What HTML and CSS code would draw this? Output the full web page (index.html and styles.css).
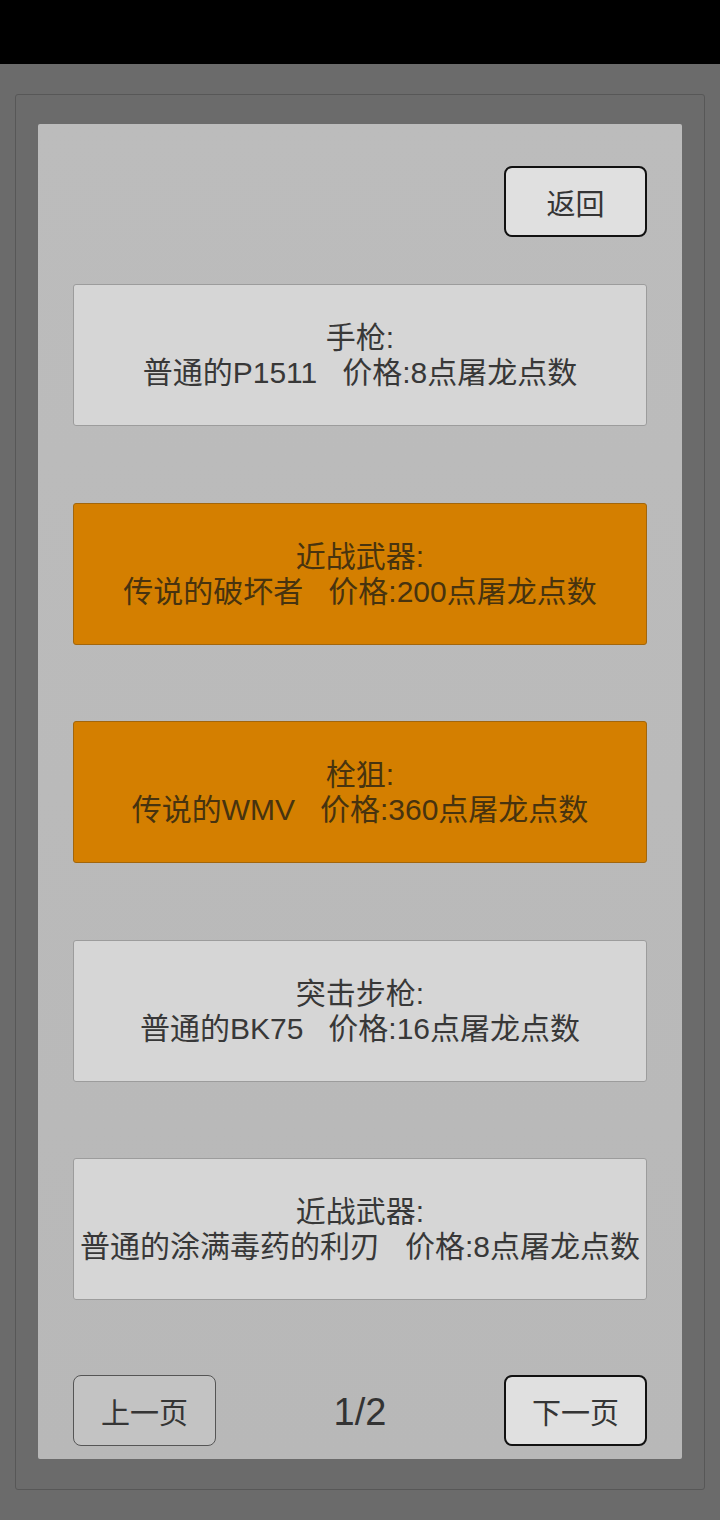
FILE: index.html
```html
<!DOCTYPE html>
<html lang="zh">
<head>
<meta charset="utf-8">
<title>商店</title>
<link rel="stylesheet" href="styles.css">
</head>
<body>
<div class="statusbar"></div>
<div class="outer">
  <div class="panel">
    <div class="top-row">
      <button class="btn btn-dark">返回</button>
    </div>
    <div class="items">
      <div class="item item-common"><span>手枪:</span><span>普通的P1511   价格:8点屠龙点数</span></div>
      <div class="item item-legend"><span>近战武器:</span><span>传说的破坏者   价格:200点屠龙点数</span></div>
      <div class="item item-legend"><span>栓狙:</span><span>传说的WMV   价格:360点屠龙点数</span></div>
      <div class="item item-common"><span>突击步枪:</span><span>普通的BK75   价格:16点屠龙点数</span></div>
      <div class="item item-common"><span>近战武器:</span><span>普通的涂满毒药的利刃   价格:8点屠龙点数</span></div>
    </div>
    <div class="pager">
      <button class="btn btn-muted">上一页</button>
      <div class="page-num">1/2</div>
      <button class="btn btn-dark">下一页</button>
    </div>
  </div>
</div>
</body>
</html>
```
FILE: styles.css
```css
html, body {
  margin: 0;
  padding: 0;
}
body {
  width: 720px;
  height: 1520px;
  background: #6b6b6b;
  font-family: "Liberation Sans", "Noto Sans CJK SC", sans-serif;
  color: #3a3a3a;
  overflow: hidden;
}
.statusbar {
  height: 64px;
  background: #000;
}
.outer {
  box-sizing: border-box;
  margin: 30px 0 0 15px;
  width: 690px;
  height: 1396px;
  border: 1px solid #575757;
  border-radius: 3px;
  background: #6b6b6b;
  padding: 29px 0 0 22px;
}
.panel {
  box-sizing: border-box;
  width: 644px;
  height: 1335px;
  background: linear-gradient(#bcbcbc, #b8b8b8);
  border-radius: 2px;
  padding: 42px 35px 0 35px;
  display: flex;
  flex-direction: column;
}
.top-row {
  display: flex;
  justify-content: flex-end;
}
.btn {
  box-sizing: border-box;
  width: 143px;
  height: 71px;
  border-radius: 8px;
  font-family: "Liberation Sans", "Noto Sans CJK SC", sans-serif;
  font-size: 29px;
  color: #353535;
  padding: 0;
  display: flex;
  align-items: center;
  justify-content: center;
}
.btn-dark {
  background: #e0e0e0;
  border: 2px solid #111;
}
.btn-muted {
  background: #c3c3c3;
  border: 1.5px solid #555;
}
.items {
  margin-top: 47px;
  display: flex;
  flex-direction: column;
  gap: 76.5px;
}
.item {
  box-sizing: border-box;
  height: 142px;
  width: 574px;
  border-radius: 3px;
  display: flex;
  flex-direction: column;
  align-items: center;
  justify-content: center;
  font-size: 30px;
  line-height: 35px;
  white-space: pre;
}
.item span {
  display: block;
}
.item-common {
  background: #d6d6d6;
  border: 1px solid #9c9c9c;
  color: #383838;
}
.item-legend {
  background: #d47f00;
  border: 1px solid #a2660c;
  color: #47330f;
}
.pager {
  margin-top: 75px;
  display: flex;
  align-items: center;
  justify-content: space-between;
}
.page-num {
  font-size: 38px;
  color: #333;
  line-height: 40px;
  padding-top: 2px;
}
```
